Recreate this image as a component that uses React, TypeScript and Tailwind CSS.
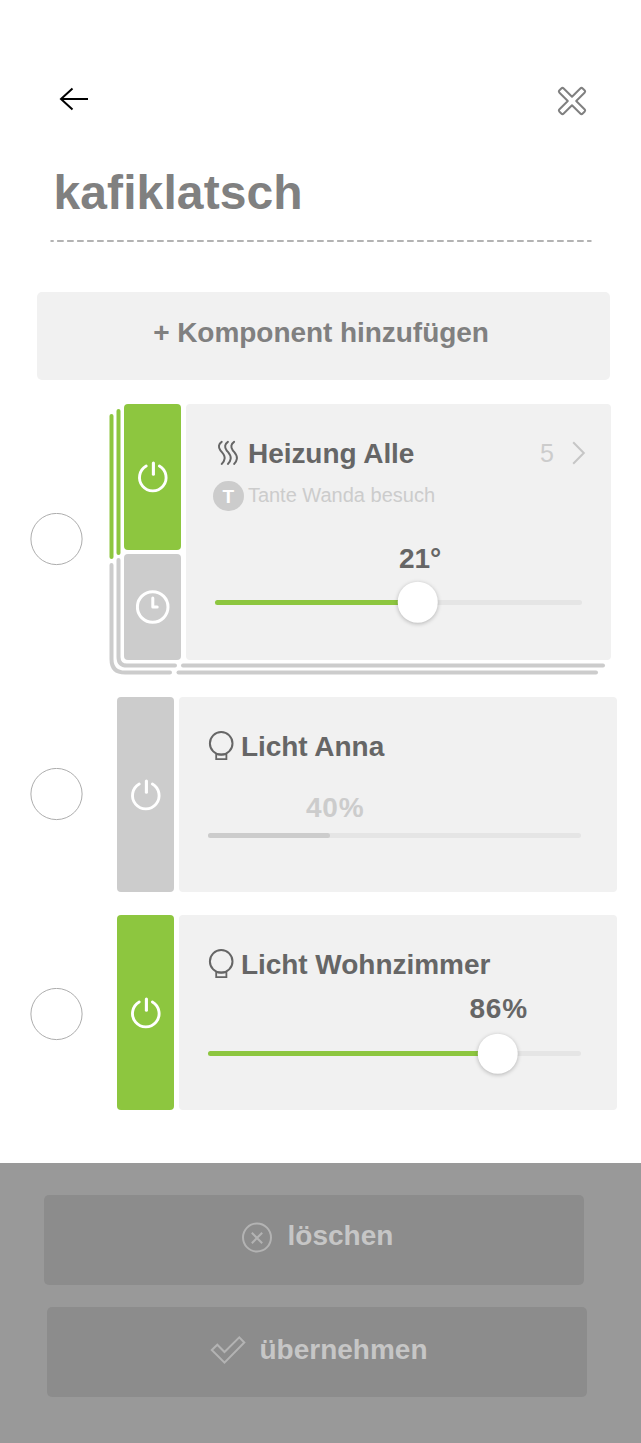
import type { ReactNode } from "react";

function PowerIcon() {
  return (
    <svg width="32" height="34" viewBox="0 0 32 34" fill="none" stroke="#fff" strokeWidth="2.9" strokeLinecap="round" className="block">
      <path d="M9.2 6A13.300 13.300 0 1 0 22.400 6" />
      <path d="M16.4 3V14.2" strokeWidth="3.1" />
    </svg>
  );
}

function ClockIcon() {
  return (
    <svg width="34" height="34" viewBox="0 0 34 34" fill="none" stroke="#fff" strokeWidth="3" strokeLinecap="round" strokeLinejoin="round" className="block">
      <circle cx="16.700" cy="17" r="15.3" />
      <path d="M16.800 8V17H21.200" />
    </svg>
  );
}

function HeatIcon() {
  return (
    <svg width="22" height="26" viewBox="0 0 22 26" fill="none" stroke="#666" strokeWidth="2" strokeLinecap="round" className="block shrink-0">
      <path d="M4.7 1.8C1.6 3.8 1 7.2 3.400 10.3C5.600 13.2 8.200 15 7.600 18.6C7.300 21 6.400 22.5 4.700 23.900" />
      <path d="M10.9 1.8C7.800 3.8 7.200 7.2 9.600 10.3C11.800 13.2 14.200 15 13.700 18.6C13.400 21 12.500 22.5 10.900 23.900" />
      <path d="M17.100 1.8C14 3.8 13.400 7.2 15.800 10.3C18 13.2 20.400 15 19.900 18.6C19.600 21 18.700 22.5 17.100 23.900" />
    </svg>
  );
}

function BulbIcon() {
  return (
    <svg width="27" height="31" viewBox="0 0 27 31" fill="none" stroke="#666" strokeWidth="2" className="block shrink-0">
      <circle cx="14.200" cy="13.400" r="11.300" />
      <path d="M9.200 24.300H19.400V29.200H9.200Z" strokeWidth="1.800" />
    </svg>
  );
}

function Slider({ width, value, color, knob }: { width: number; value: number; color: string; knob?: boolean }) {
  return (
    <div className="relative h-[5px] rounded-full bg-[#e5e5e5]" style={{ width }}>
      <div className={`h-full rounded-full ${color}`} style={{ width: value }} />
      {knob && (
        <div
          className="absolute top-1/2 size-[40.500px] -translate-x-1/2 -translate-y-1/2 rounded-full bg-white shadow-[0_1px_4px_rgba(0,0,0,0.26)]"
          style={{ left: value }}
        />
      )}
    </div>
  );
}

function Row({ gap, children }: { gap: string; children: ReactNode }) {
  return (
    <div className="flex pl-[30px]">
      <div className={`flex w-[53px] shrink-0 justify-center ${gap}`}>
        <svg width="53" height="53" viewBox="0 0 53 53" className="block">
          <circle cx="26.5" cy="26" r="25.6" fill="#fff" stroke="#adadad" />
        </svg>
      </div>
      {children}
    </div>
  );
}

function LightCard({ name, percent, on }: { name: string; percent: number; on: boolean }) {
  return (
    <div className="ml-[34.400px] flex h-[195px] gap-[5px]">
      <div className={`flex w-[57px] justify-center rounded-[4px] pt-[81px] ${on ? "bg-[#8dc63f]" : "bg-[#ccc]"}`}>
        <PowerIcon />
      </div>
      <div className="w-[438px] rounded-[4px] bg-[#f1f1f1] pl-[28px]">
        <div className="flex pt-[33px]">
          <div>
            <BulbIcon />
          </div>
          <h2 className="ml-[6.500px] h-[32px] pt-[1px] text-[28px] leading-[32px] font-bold tracking-[-0.03px] text-[#666]">{name}</h2>
        </div>
        <div className={`h-[32px] text-[28px] leading-[32px] font-bold tracking-[0.8px] ${on ? "mt-[13px] pl-[262px] text-[#666]" : "mt-[30px] pl-[98.5px] text-[#ccc]"}`}>
          {percent}%
        </div>
        <div className={`pl-[0.500px] ${on ? "mt-[26px]" : "mt-[9px]"}`}>
          <Slider width={373} value={on ? 290 : 122} color={on ? "bg-[#8dc63f]" : "bg-[#ccc]"} knob={on} />
        </div>
      </div>
    </div>
  );
}

function HeatingCard() {
  return (
    <div className="relative ml-[41.400px] flex h-[256px] gap-[5px]">
      <svg width="510" height="275" viewBox="109 404 510 275" fill="none" strokeWidth="4" strokeLinecap="round" className="absolute -top-[0.3px] -left-[15.4px]">
        <g stroke="#8dc63f">
          <path d="M118.5 411V553" />
          <path d="M111.5 416V557" />
        </g>
        <g stroke="#ccc">
          <path d="M118.5 560V657Q118.5 665.6 127 665.6H175" />
          <path d="M111.5 565V659Q111.5 672.6 125 672.6H170" />
          <path d="M183 665.6H603" />
          <path d="M178.500 672.6H596" />
        </g>
      </svg>
      <div className="flex w-[57px] flex-col gap-1">
        <div className="flex h-[146px] justify-center rounded-[4px] bg-[#8dc63f] pt-[56px]">
          <PowerIcon />
        </div>
        <div className="flex h-[106px] justify-center rounded-[4px] bg-[#ccc] pt-[36px]">
          <ClockIcon />
        </div>
      </div>
      <div className="w-[425px] rounded-[4px] bg-[#f1f1f1] pl-[26px]">
        <div className="flex pt-[33px]">
          <div className="pt-[3px] pl-[4.600px]">
            <HeatIcon />
          </div>
          <h2 className="ml-[9px] h-[32px] w-[180px] pt-[1px] text-[28px] leading-[32px] font-bold tracking-[-0.05px] text-[#666]">Heizung Alle</h2>
          <span className="ml-[112px] text-[25px] leading-[33px] text-[#ccc]">5</span>
          <svg width="14" height="24" viewBox="0 0 14 24" fill="none" stroke="#c6c6c6" strokeWidth="2" className="mt-[4px] ml-[18px] block">
            <path d="M1.2 1.300L11.800 12L1.2 22.700" />
          </svg>
        </div>
        <div className="mt-[10.500px] flex h-[32px] pl-[0.700px]">
          <span className="flex size-[30.500px] shrink-0 justify-center rounded-full bg-[#ccc] text-[19px] leading-[32px] font-bold text-white">T</span>
          <span className="ml-[4.300px] text-[20px] leading-[28px] text-[#ccc]">Tante Wanda besuch</span>
        </div>
        <div className="mt-[30px] h-[32px] pl-[186.500px] text-[28px] leading-[32px] font-bold text-[#666]">21°</div>
        <div className="mt-[25px] pl-[2.200px]">
          <Slider width={367.5} value={203} color="bg-[#8dc63f]" knob />
        </div>
      </div>
    </div>
  );
}

export default function App() {
  return (
    <div className="flex h-[1443px] w-[641px] flex-col overflow-hidden bg-white font-['Liberation_Sans',Arial,sans-serif]">
      <header className="flex h-[165px] justify-between pt-[84px] pr-[52px] pl-[58px]">
        <svg width="32" height="30" viewBox="58 84 32 30" fill="none" stroke="#000" strokeWidth="2" className="block">
          <path d="M72.500 88.500L61 99L72.500 109.500M61 99H88" />
        </svg>
        <svg width="34" height="34" viewBox="555 84 34 34" fill="none" stroke="#808080" strokeWidth="2" strokeLinejoin="round" className="block">
          <path d="M572 96.800L580.300 88.500Q581.500 87.300 582.700 88.500L584.500 90.300Q585.700 91.500 584.500 92.700L576.200 101L584.500 109.300Q585.700 110.500 584.500 111.700L582.700 113.500Q581.500 114.700 580.300 113.500L572 105.200L563.700 113.500Q562.500 114.700 561.300 113.500L559.500 111.700Q558.300 110.500 559.500 109.300L567.800 101L559.500 92.700Q558.300 91.500 559.500 90.300L561.300 88.500Q562.500 87.300 563.700 88.500Z" />
        </svg>
      </header>
      <h1 className="ml-[51px] h-[75px] pl-[2.500px] text-[48px] leading-[56px] font-bold tracking-[0.1px] text-[#808080]">kafiklatsch</h1>
      <svg width="542" height="2" viewBox="0 0 542 2" className="ml-[50px] block shrink-0">
        <path d="M0.500 1H541.500" stroke="#b3b3b3" strokeWidth="2" strokeDasharray="6.600 3.400" strokeDashoffset="3.400" />
      </svg>
      <button className="mt-[50px] ml-[37px] flex h-[88px] w-[573px] shrink-0 items-start justify-center rounded-[5px] bg-[#f1f1f1] pt-[25px] text-[28px] leading-[32px] font-bold tracking-[-0.05px] text-[#808080]">
        <span className="-ml-[5px]">+ Komponent hinzufügen</span>
      </button>
      <main className="flex flex-col pt-[24px]">
        <Row gap="pt-[108.500px]">
          <HeatingCard />
        </Row>
        <div className="mt-[37px]">
          <Row gap="pt-[71px]">
            <LightCard name="Licht Anna" percent={40} on={false} />
          </Row>
        </div>
        <div className="mt-[23px]">
          <Row gap="pt-[73px]">
            <LightCard name="Licht Wohnzimmer" percent={86} on />
          </Row>
        </div>
      </main>
      <footer className="mt-auto h-[280px] shrink-0 bg-[#999] pt-[32px] text-[28px] leading-[32px] font-bold text-[#c6c6c6]">
        <button className="ml-[44px] flex h-[90px] w-[540px] items-start rounded-[5px] bg-[#8c8c8c] pt-[25px] pl-[197px]">
          <svg width="32" height="32" viewBox="0 0 32 32" fill="none" stroke="#b3b3b3" strokeWidth="2" className="mt-[1px] block">
            <circle cx="16" cy="16.500" r="14" />
            <path d="M10.800 11.800L21.200 22.200M21.200 11.800L10.800 22.200" />
          </svg>
          <span className="ml-[14.500px]">löschen</span>
        </button>
        <button className="mt-[22px] ml-[47px] flex h-[90px] w-[540px] items-start rounded-[5px] bg-[#8c8c8c] pt-[27px] pl-[163px]">
          <svg width="36" height="30" viewBox="210 1335 36 30" fill="none" stroke="#b3b3b3" strokeWidth="2" className="mt-[1px] block">
            <path d="M211.800 1350L217.300 1344.700L224.500 1352L239.300 1337.400L244.300 1342.500L224.500 1362.700Z" />
          </svg>
          <span className="ml-[13.500px]">übernehmen</span>
        </button>
      </footer>
    </div>
  );
}
